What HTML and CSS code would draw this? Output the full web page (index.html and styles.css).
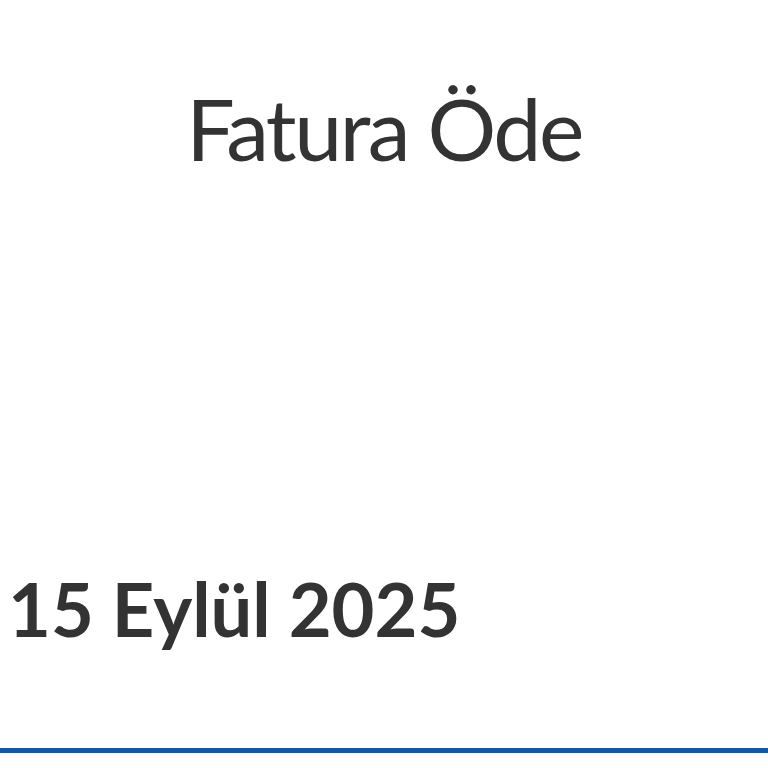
FILE: index.html
```html
<!DOCTYPE html>
<html lang="tr">
<head>
    <meta charset="UTF-8">
    <meta name="viewport" content="width=device-width, initial-scale=1.0">
    <title>Fatura Öde</title>
    <link rel="stylesheet" href="styles.css">
</head>
<body>
    <header class="page-header">
        <h1 class="page-title">Fatura Öde</h1>
    </header>

    <main class="bill">
        <div class="bill-date">15 Eylül 2025</div>
    </main>

    <div class="bottom-bar"></div>
</body>
</html>
```

FILE: styles.css
```css
* {
    margin: 0;
    padding: 0;
    box-sizing: border-box;
}

body {
    font-family: 'Lato', 'Noto Sans', sans-serif;
    color: #333333;
    background: #ffffff;
    height: 768px;
    display: flex;
    flex-direction: column;
    overflow: hidden;
}

/* Header */
.page-header {
    padding-top: 78px;
    text-align: center;
}

.page-title {
    font-size: 86px;
    font-weight: 400;
    letter-spacing: -2.5px;
    line-height: 100px;
    color: #333333;
}

/* Bill info */
.bill {
    flex: 1;
    display: flex;
    align-items: flex-end;
    padding: 0 0 99px 8px;
}

.bill-date {
    font-size: 74px;
    font-weight: 700;
    line-height: 80px;
    color: #333333;
}

.bottom-bar {
    height: 5px;
    background: #0a5cb0;
    margin-bottom: 15px;
}
```
